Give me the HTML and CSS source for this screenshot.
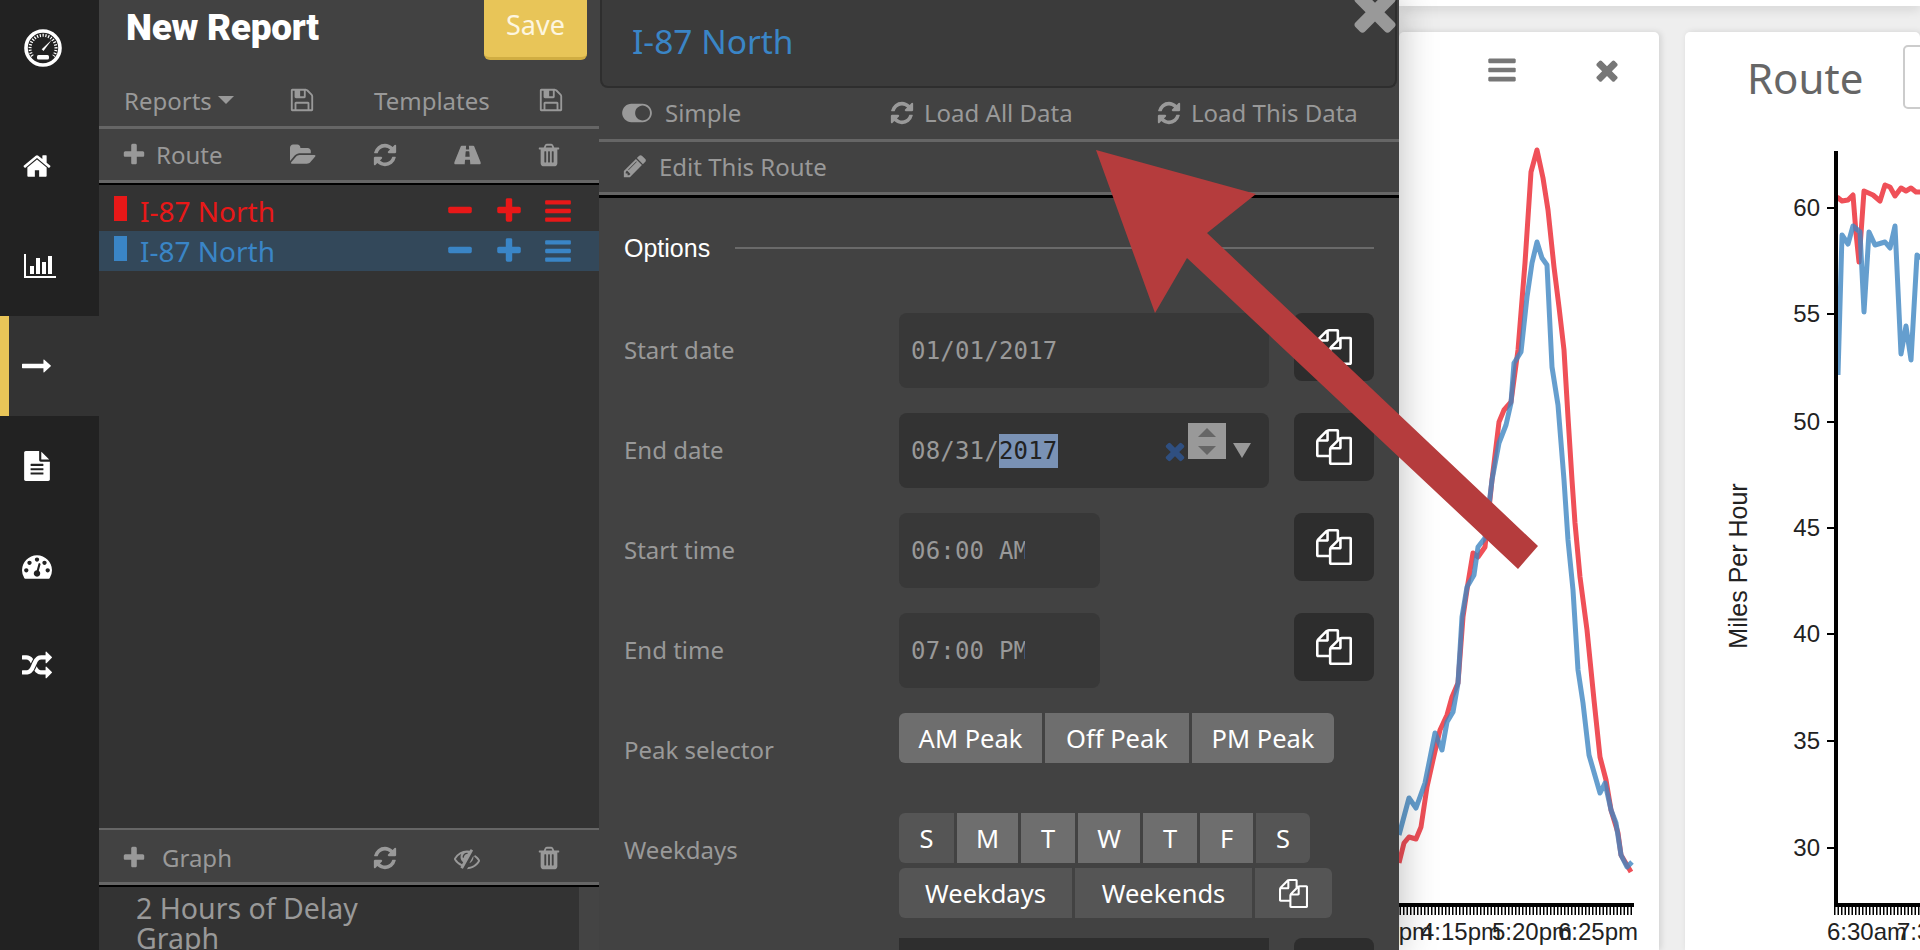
FILE: index.html
```html
<!DOCTYPE html>
<html lang="en">
<head>
    <meta charset="UTF-8">
    <title>New Report</title>
    <link rel="stylesheet" href="styles.css">
</head>
<body>
    <svg class="sprite" xmlns="http://www.w3.org/2000/svg">
        <symbol id="i-plus" viewBox="0 0 1792 1792"><path d="M1600 736v192q0 40-28 68t-68 28h-416v416q0 40-28 68t-68 28h-192q-40 0-68-28t-28-68v-416h-416q-40 0-68-28t-28-68v-192q0-40 28-68t68-28h416v-416q0-40 28-68t68-28h192q40 0 68 28t28 68v416h416q40 0 68 28t28 68z"/></symbol>
        <symbol id="i-minus" viewBox="0 0 1792 1792"><path d="M1600 736v192q0 40-28 68t-68 28h-1216q-40 0-68-28t-28-68v-192q0-40 28-68t68-28h1216q40 0 68 28t28 68z"/></symbol>
        <symbol id="i-bars" viewBox="0 0 1792 1792"><path d="M1664 1344v128q0 26-19 45t-45 19h-1408q-26 0-45-19t-19-45v-128q0-26 19-45t45-19h1408q26 0 45 19t19 45zm0-512v128q0 26-19 45t-45 19h-1408q-26 0-45-19t-19-45v-128q0-26 19-45t45-19h1408q26 0 45 19t19 45zm0-512v128q0 26-19 45t-45 19h-1408q-26 0-45-19t-19-45v-128q0-26 19-45t45-19h1408q26 0 45 19t19 45z"/></symbol>
        <symbol id="i-times" viewBox="0 0 1792 1792"><path d="M1490 1322q0 40-28 68l-136 136q-28 28-68 28t-68-28l-294-294-294 294q-28 28-68 28t-68-28l-136-136q-28-28-28-68t28-68l294-294-294-294q-28-28-28-68t28-68l136-136q28-28 68-28t68 28l294 294 294-294q28-28 68-28t68 28l136 136q28 28 28 68t-28 68l-294 294 294 294q28 28 28 68z"/></symbol>
        <symbol id="i-refresh" viewBox="0 0 1792 1792"><path d="M1639 1056q0 5-1 7-64 268-268 434.5t-478 166.5q-146 0-282.5-55t-243.5-157l-129 129q-19 19-45 19t-45-19-19-45v-448q0-26 19-45t45-19h448q26 0 45 19t19 45-19 45l-137 137q71 66 161 102t187 36q134 0 250-65t186-179q11-17 53-117 8-23 30-23h192q13 0 22.5 9.5t9.5 22.5zm25-800v448q0 26-19 45t-45 19h-448q-26 0-45-19t-19-45 19-45l138-138q-148-137-349-137-134 0-250 65t-186 179q-11 17-53 117-8 23-30 23h-199q-13 0-22.5-9.5t-9.5-22.5v-7q65-268 270-434.5t480-166.5q146 0 284 55.5t245 156.5l130-129q19-19 45-19t45 19 19 45z"/></symbol>
        <symbol id="i-trash" viewBox="0 0 1792 1792"><path d="M704 1376v-704q0-14-9-23t-23-9h-64q-14 0-23 9t-9 23v704q0 14 9 23t23 9h64q14 0 23-9t9-23zm256 0v-704q0-14-9-23t-23-9h-64q-14 0-23 9t-9 23v704q0 14 9 23t23 9h64q14 0 23-9t9-23zm256 0v-704q0-14-9-23t-23-9h-64q-14 0-23 9t-9 23v704q0 14 9 23t23 9h64q14 0 23-9t9-23zm-544-992h448l-48-117q-7-9-17-11h-317q-10 2-17 11zm928 32v64q0 14-9 23t-23 9h-96v948q0 83-47 143.5t-113 60.5h-832q-66 0-113-58.5t-47-141.5v-952h-96q-14 0-23-9t-9-23v-64q0-14 9-23t23-9h309l70-167q15-37 54-63t79-26h320q40 0 79 26t54 63l70 167h309q14 0 23 9t9 23z"/></symbol>
        <symbol id="i-folder" viewBox="0 0 1920 1792"><path d="M1879 952q0 31-31 66l-336 396q-43 51-120.5 86.5t-143.5 35.5h-1088q-34 0-60.5-13t-26.5-43q0-31 31-66l336-396q43-51 120.5-86.5t143.5-35.5h1088q34 0 60.5 13t26.5 43zm-343-344v160h-832q-94 0-197 47.5t-164 119.5l-337 396-5 6q0-4-.5-12.5t-.5-12.5v-960q0-92 66-158t158-66h320q92 0 158 66t66 158v32h544q92 0 158 66t66 158z"/></symbol>
        <symbol id="i-save" viewBox="0 0 1792 1792"><path d="M512 1536h768v-384h-768v384zm896 0h128v-896q0-14-10-38.5t-20-34.5l-281-281q-10-10-34-20t-39-10v416q0 40-28 68t-68 28h-576q-40 0-68-28t-28-68v-416h-128v1280h128v-416q0-40 28-68t68-28h832q40 0 68 28t28 68v416zm-384-928v-320q0-13-9.5-22.5t-22.5-9.5h-192q-13 0-22.5 9.5t-9.5 22.5v320q0 13 9.5 22.5t22.5 9.5h192q13 0 22.5-9.5t9.5-22.5zm640 32v928q0 40-28 68t-68 28h-1344q-40 0-68-28t-28-68v-1344q0-40 28-68t68-28h928q40 0 88 20t76 48l280 280q28 28 48 76t20 88z"/></symbol>
        <symbol id="i-road" viewBox="0 0 1920 1792"><path d="M1111 997v-4l-24-320q-1-13-11-22.5t-23-9.5h-186q-13 0-23 9.5t-11 22.5l-24 320v4q-1 12 8 20t21 8h244q12 0 21-8t8-20zm759 467q0 73-46 73h-704q13 0 22-9.5t8-22.5l-20-256q-1-13-11-22.5t-23-9.5h-272q-13 0-23 9.5t-11 22.5l-20 256q-1 13 8 22.5t22 9.5h-704q-46 0-46-73 0-54 26-116l417-1044q8-19 26-33t38-14h339q-13 0-23 9.5t-11 22.5l-15 192q-1 14 8 23t22 9h166q13 0 22-9t8-23l-15-192q-1-13-11-22.5t-23-9.5h339q20 0 38 14t26 33l417 1044q26 62 26 116z"/></symbol>
        <symbol id="i-pencil" viewBox="0 0 1792 1792"><path d="M491 1536l91-91-235-235-91 91v107h128v128h107zm523-928q0-22-22-22-10 0-17 7l-542 542q-7 7-7 17 0 22 22 22 10 0 17-7l542-542q7-7 7-17zm-54-192l416 416-832 832h-416v-416zm683 96q0 53-37 90l-166 166-416-416 166-165q36-38 90-38 53 0 91 38l235 234q37 39 37 91z"/></symbol>
        <symbol id="i-files" viewBox="0 0 1792 1792"><path d="M1696 384q40 0 68 28t28 68v1216q0 40-28 68t-68 28h-960q-40 0-68-28t-28-68v-288h-544q-40 0-68-28t-28-68v-672q0-40 20-88t48-76l408-408q28-28 76-48t88-20h416q40 0 68 28t28 68v328q68-40 128-40h416zm-544 213l-299 299h299v-299zm-640-384l-299 299h299v-299zm196 647l316-316v-416h-384v416q0 40-28 68t-68 28h-416v640h512v-256q0-40 20-88t48-76zm956 804v-1152h-384v416q0 40-28 68t-68 28h-416v640h896z"/></symbol>
        <symbol id="i-toggle" viewBox="0 0 2048 1792"><path d="M0 896q0-130 51-248.5t136.5-204 204-136.5 248.5-51h768q130 0 248.5 51t204 136.5 136.5 204 51 248.5-51 248.5-136.5 204-204 136.5-248.5 51h-768q-130 0-248.5-51t-204-136.5-136.5-204-51-248.5zm1408 512q104 0 198.5-40.5t163.5-109.5 109.5-163.5 40.5-198.5-40.5-198.5-109.5-163.5-163.5-109.5-198.5-40.5-198.5 40.5-163.5 109.5-109.5 163.5-40.5 198.5 40.5 198.5 109.5 163.5 163.5 109.5 198.5 40.5z"/></symbol>
        <symbol id="i-eye-slash" viewBox="0 0 1792 1792"><path d="M555 1335l78-141q-87-63-136-159t-49-203q0-121 61-225-229 117-381 353 167 258 427 375zm389-759q0-20-14-34t-34-14q-125 0-214.5 89.5t-89.5 214.5q0 20 14 34t34 14 34-14 14-34q0-86 61-147t147-61q20 0 34-14t14-34zm363-191q0 7-1 9-106 189-316 567t-315 566l-49 89q-10 16-28 16-12 0-134-70-16-10-16-28 0-12 44-87-143-65-263.5-173t-208.5-245q-20-31-20-69t20-69q153-235 380-371t496-136q89 0 180 17l54-97q10-16 28-16 5 0 18 6t31 15.5 33 18.5 31.5 18.5 19.5 11.5q16 10 16 27zm37 447q0 139-79 253.5t-209 164.5l280-502q8 45 8 84zm448 256q0 35-20 69-39 64-109 145-150 172-347.5 267t-419.5 95l74-132q212-18 392.5-137t301.5-307q-115-179-282-294l63-112q95 64 182.5 153t144.5 184q20 34 20 69z"/></symbol>
        <symbol id="i-dashboard" viewBox="0 0 1792 1792"><path d="M384 1152q0-53-37.5-90.5t-90.5-37.5-90.5 37.5-37.5 90.5 37.5 90.5 90.5 37.5 90.5-37.5 37.5-90.5zm192-448q0-53-37.5-90.5t-90.5-37.5-90.5 37.5-37.5 90.5 37.5 90.5 90.5 37.5 90.5-37.5 37.5-90.5zm428 481l101-382q6-26-7.5-48.5t-38.5-29.5-48 6.5-30 39.5l-101 382q-60 5-107 43.5t-63 98.5q-20 77 20 146t117 89 146-20 89-117q16-60-6-117t-72-91zm660-33q0-53-37.5-90.5t-90.5-37.5-90.5 37.5-37.5 90.5 37.5 90.5 90.5 37.5 90.5-37.5 37.5-90.5zm-640-640q0-53-37.5-90.5t-90.5-37.5-90.5 37.5-37.5 90.5 37.5 90.5 90.5 37.5 90.5-37.5 37.5-90.5zm448 192q0-53-37.5-90.5t-90.5-37.5-90.5 37.5-37.5 90.5 37.5 90.5 90.5 37.5 90.5-37.5 37.5-90.5zm320 448q0 261-141 483-19 29-54 29h-1402q-35 0-54-29-141-221-141-483 0-182 71-348t191-286 286-191 348-71 348 71 286 191 191 286 71 348z"/></symbol>
        <symbol id="i-home" viewBox="0 0 1792 1792"><path d="M1472 992v480q0 26-19 45t-45 19h-384v-384h-256v384h-384q-26 0-45-19t-19-45v-480q0-1 .5-3t.5-3l575-474 575 474q1 2 1 6zm223-69l-62 74q-8 9-21 11h-3q-13 0-21-7l-692-577-692 577q-12 8-24 7-13-2-21-11l-62-74q-8-10-7-23.5t11-21.5l719-599q32-26 76-26t76 26l244 204v-195q0-14 9-23t23-9h192q14 0 23 9t9 23v408l219 182q10 8 11 21.5t-7 23.5z"/></symbol>
        <symbol id="i-chart" viewBox="0 0 2048 1792"><path d="M640 896v512h-256v-512h256zm384-512v1024h-256v-1024h256zm1024 1152v128h-2048v-1536h128v1408h1920zm-640-896v768h-256v-768h256zm384-384v1152h-256v-1152h256z"/></symbol>
        <symbol id="i-arrow" viewBox="0 0 1792 1792"><path d="M1728 893q0 14-10 24l-384 354q-16 14-35 6-19-9-19-29v-224h-1248q-14 0-23-9t-9-23v-192q0-14 9-23t23-9h1248v-224q0-21 19-29t35 5l384 350q10 10 10 24z"/></symbol>
        <symbol id="i-file" viewBox="0 0 1792 1792"><path d="M1596 476q14 14 28 36h-472v-472q22 14 36 28zm-476 164h544v1056q0 40-28 68t-68 28h-1344q-40 0-68-28t-28-68v-1600q0-40 28-68t68-28h800v544q0 40 28 68t68 28zm160 736v-64q0-14-9-23t-23-9h-704q-14 0-23 9t-9 23v64q0 14 9 23t23 9h704q14 0 23-9t9-23zm0-256v-64q0-14-9-23t-23-9h-704q-14 0-23 9t-9 23v64q0 14 9 23t23 9h704q14 0 23-9t9-23zm0-256v-64q0-14-9-23t-23-9h-704q-14 0-23 9t-9 23v64q0 14 9 23t23 9h704q14 0 23-9t9-23z"/></symbol>
        <symbol id="i-random" viewBox="0 0 1792 1792"><path d="M666 481q-60 92-137 273-22-45-37-72.5t-40.5-63.5-51-56.5-63-35-81.5-14.5h-224q-14 0-23-9t-9-23v-192q0-14 9-23t23-9h224q250 0 410 225zm1126 799q0 14-9 23l-320 320q-9 9-23 9-13 0-22.5-9.5t-9.5-22.5v-192q-32 0-85 .5t-81 1-73-1-71-5-64-10.5-63-18.5-58-28.5-59-40-55-53.5-56-69.5q59-93 136-273 22 45 37 72.5t40.5 63.5 51 56.5 63 35 81.5 14.5h256v-192q0-14 9-23t23-9q12 0 24 10l319 319q9 9 9 23zm0-896q0 14-9 23l-320 320q-9 9-23 9-13 0-22.5-9.5t-9.5-22.5v-192h-256q-48 0-87 15t-69 45-51 61.5-45 77.5q-32 62-78 171-29 66-49.5 111t-54 105-64 100-74 83-90 68.5-106.5 42-128 16.5h-224q-14 0-23-9t-9-23v-192q0-14 9-23t23-9h224q48 0 87-15t69-45 51-61.5 45-77.5q32-62 78-171 29-66 49.5-111t54-105 64-100 74-83 90-68.5 106.5-42 128-16.5h256v-192q0-14 9-23t23-9q12 0 24 10l319 319q9 9 9 23z"/></symbol>
    </svg>

    <!-- main icon rail -->
    <nav class="rail">
        <div class="rail-logo">
            <svg class="logo" viewBox="0 0 38 38">
                <circle cx="19" cy="19" r="17" fill="none" stroke="#fff" stroke-width="3.6"/>
                <path class="logo-ticks" d="M8.5 27A13 13 0 1 1 29.500 27"/>
                <path d="M17.700 20.200L28 10.500l-8.500 11.500z" fill="#fff"/>
                <rect x="13" y="26" width="12" height="4.500" rx="1.500" fill="#fff"/>
            </svg>
        </div>
        <a class="rail-item"><svg class="rail-icon"><use href="#i-home"/></svg></a>
        <a class="rail-item"><svg class="rail-icon rail-icon-wide"><use href="#i-chart"/></svg></a>
        <a class="rail-item active"><svg class="rail-icon"><use href="#i-arrow"/></svg></a>
        <a class="rail-item"><svg class="rail-icon rail-icon-tall"><use href="#i-file"/></svg></a>
        <a class="rail-item"><svg class="rail-icon"><use href="#i-dashboard"/></svg></a>
        <a class="rail-item"><svg class="rail-icon"><use href="#i-random"/></svg></a>
    </nav>

    <!-- report panel -->
    <section class="report">
        <header class="report-head">
            <h1 class="report-title">New Report</h1>
            <button class="save-btn">Save</button>
        </header>
        <div class="tool-row tool-row-reports">
            <span class="tool-label">Reports <span class="caret"></span></span>
            <svg class="icon"><use href="#i-save"/></svg>
            <span class="tool-label tool-templates">Templates</span>
            <svg class="icon"><use href="#i-save"/></svg>
        </div>
        <div class="tool-row tool-row-route">
            <span class="tool-label"><svg class="icon"><use href="#i-plus"/></svg> Route</span>
            <svg class="icon"><use href="#i-folder"/></svg>
            <svg class="icon"><use href="#i-refresh"/></svg>
            <svg class="icon icon-road"><use href="#i-road"/></svg>
            <svg class="icon"><use href="#i-trash"/></svg>
        </div>
        <ul class="route-list">
            <li class="route route-red">
                <span class="route-mark"></span>
                <span class="route-name">I-87 North</span>
                <svg class="route-icon"><use href="#i-minus"/></svg>
                <svg class="route-icon"><use href="#i-plus"/></svg>
                <svg class="route-icon"><use href="#i-bars"/></svg>
            </li>
            <li class="route route-blue">
                <span class="route-mark"></span>
                <span class="route-name">I-87 North</span>
                <svg class="route-icon"><use href="#i-minus"/></svg>
                <svg class="route-icon"><use href="#i-plus"/></svg>
                <svg class="route-icon"><use href="#i-bars"/></svg>
            </li>
        </ul>
        <div class="tool-row tool-row-graph">
            <span class="tool-label"><svg class="icon"><use href="#i-plus"/></svg> Graph</span>
            <svg class="icon"><use href="#i-refresh"/></svg>
            <svg class="icon"><use href="#i-eye-slash"/></svg>
            <svg class="icon"><use href="#i-trash"/></svg>
        </div>
        <div class="graph-list">
            <div class="graph-name">2 Hours of Delay Graph</div>
            <div class="graph-scroll"></div>
        </div>
    </section>

    <!-- route editor -->
    <section class="editor">
        <div class="editor-name">I-87 North</div>
        <svg class="editor-close"><use href="#i-times"/></svg>
        <div class="editor-actions">
            <span class="action action-simple"><svg class="icon icon-toggle"><use href="#i-toggle"/></svg>Simple</span>
            <span class="action"><svg class="icon"><use href="#i-refresh"/></svg>Load All Data</span>
            <span class="action"><svg class="icon"><use href="#i-refresh"/></svg>Load This Data</span>
        </div>
        <div class="editor-edit">
            <span class="action"><svg class="icon"><use href="#i-pencil"/></svg>Edit This Route</span>
        </div>
        <div class="options-head"><span>Options</span><i class="options-line"></i></div>

        <div class="field">
            <label class="field-label">Start date</label>
            <div class="value-box"><span class="mono">01/01/2017</span></div>
            <button class="copy-btn"><svg class="copy-icon"><use href="#i-files"/></svg></button>
        </div>
        <div class="field">
            <label class="field-label">End date</label>
            <div class="value-box value-box-focus">
                <span class="mono">08/31/<span class="mono-sel">2017</span></span>
                <svg class="date-clear"><use href="#i-times"/></svg>
                <span class="date-spin"><i class="spin-up"></i><i class="spin-down"></i></span>
                <span class="date-drop"></span>
            </div>
            <button class="copy-btn"><svg class="copy-icon"><use href="#i-files"/></svg></button>
        </div>
        <div class="field">
            <label class="field-label">Start time</label>
            <div class="value-box value-box-time"><span class="mono mono-clip">06:00 AM</span></div>
            <button class="copy-btn"><svg class="copy-icon"><use href="#i-files"/></svg></button>
        </div>
        <div class="field">
            <label class="field-label">End time</label>
            <div class="value-box value-box-time"><span class="mono mono-clip">07:00 PM</span></div>
            <button class="copy-btn"><svg class="copy-icon"><use href="#i-files"/></svg></button>
        </div>
        <div class="field">
            <label class="field-label">Peak selector</label>
            <div class="btn-group">
                <button class="seg seg-on seg-peak1">AM Peak</button>
                <button class="seg seg-on seg-peak2">Off Peak</button>
                <button class="seg seg-on seg-peak3">PM Peak</button>
            </div>
        </div>
        <div class="field field-days">
            <label class="field-label">Weekdays</label>
            <div class="days">
                <div class="btn-group">
                    <button class="seg seg-d1">S</button>
                    <button class="seg seg-on seg-d2">M</button>
                    <button class="seg seg-on seg-d3">T</button>
                    <button class="seg seg-on seg-d4">W</button>
                    <button class="seg seg-on seg-d5">T</button>
                    <button class="seg seg-on seg-d6">F</button>
                    <button class="seg seg-d7">S</button>
                </div>
                <div class="btn-group">
                    <button class="seg seg-weekdays">Weekdays</button>
                    <button class="seg seg-weekends">Weekends</button>
                    <button class="seg seg-copy"><svg class="seg-icon"><use href="#i-files"/></svg></button>
                </div>
            </div>
        </div>
        <div class="field">
            <label class="field-label"></label>
            <div class="value-box value-box-last"></div>
            <button class="copy-btn"></button>
        </div>
    </section>

    <!-- graphs behind the editor -->
    <main class="board">
        <div class="board-top"></div>
        <div class="cards">
            <article class="card card-first">
                <div class="card-head">
                    <svg class="card-tool card-bars"><use href="#i-bars"/></svg>
                    <svg class="card-tool card-close"><use href="#i-times"/></svg>
                </div>
                <svg class="chart" viewBox="0 80 260 838" width="260" height="838">
                    <polyline class="line line-red" points="0,831 5,811 10,805 17,807 22,795 28,755 34,728 41,698 48,683 53,665 59,651 64,585 69,551 74,521 79,525 86,515 93,448 100,390 105,378 112,370 119,318 126,231 132,140 138,118 144,146 149,178 155,235 160,275 165,318 169,385 173,448 176,491 181,545 188,598 195,668 201,725 207,748 212,778 219,801 222,823 232,840"/>
                    <polyline class="line line-blue" points="0,803 10,766 17,776 26,751 36,701 43,718 48,690 54,680 59,651 63,585 68,555 75,543 79,515 86,506 93,448 100,411 107,393 112,371 115,331 122,320 128,265 133,231 138,210 143,226 148,233 153,335 159,373 165,448 169,508 174,558 179,638 184,671 190,723 201,761 206,751 212,778 217,791 222,823 228,835 233,830"/>
                    <line class="axis" x1="-10" y1="873" x2="235" y2="873"/>
                    <line class="ticks" x1="-10" y1="879" x2="235" y2="879"/>
                    <text class="tick-text" x="-47" y="908">3:10pm</text>
                    <text class="tick-text" x="22" y="908">4:15pm</text>
                    <text class="tick-text" x="93" y="908">5:20pm</text>
                    <text class="tick-text" x="159" y="908">6:25pm</text>
                </svg>
            </article>
            <article class="card card-second">
                <div class="card-head card-head-route">
                    <span class="card-title">Route</span>
                    <span class="card-select"></span>
                </div>
                <svg class="chart" viewBox="0 80 235 838" width="235" height="838">
                    <polyline class="line line-red" points="152,165 157,169 163,168 168,163 171,201 174,230 179,159 188,163 195,169 200,153 205,155 210,164 216,156 221,159 226,156 231,160 236,160"/>
                    <polyline class="line line-blue" points="153,343 157,203 163,212 168,194 175,200 179,280 184,200 190,213 200,210 205,216 210,194 216,322 221,294 226,328 232,223 236,226"/>
                    <line class="axis" x1="151" y1="119" x2="151" y2="875"/>
                    <line class="axis" x1="149" y1="873" x2="235" y2="873"/>
                    <line class="ticks" x1="149" y1="879" x2="235" y2="879"/>
                    <path class="tick-marks" d="M142 176h9M142 282h9M142 390h9M142 496h9M142 602h9M142 709h9M142 816h9"/>
                    <text class="tick-text tick-y" x="135" y="184">60</text>
                    <text class="tick-text tick-y" x="135" y="290">55</text>
                    <text class="tick-text tick-y" x="135" y="398">50</text>
                    <text class="tick-text tick-y" x="135" y="504">45</text>
                    <text class="tick-text tick-y" x="135" y="610">40</text>
                    <text class="tick-text tick-y" x="135" y="717">35</text>
                    <text class="tick-text tick-y" x="135" y="824">30</text>
                    <text class="axis-title" transform="translate(62 534) rotate(-90)">Miles Per Hour</text>
                    <text class="tick-text" x="142" y="908">6:30am</text>
                    <text class="tick-text" x="212" y="908">7:35am</text>
                </svg>
            </article>
        </div>
    </main>

    <!-- annotation drawn on top of the screenshot -->
    <svg class="callout" viewBox="0 0 1920 950">
        <polygon points="1096,150 1256,194 1207,233 1538,546 1518,569 1187,258 1155,313"/>
    </svg>
</body>
</html>
```

FILE: styles.css
```css
* {
    box-sizing: border-box;
}

html {
    height: 100%;
    overflow: hidden;
}

body {
    margin: 0;
    display: flex;
    position: relative;
    height: 950px;
    overflow: hidden;
    font-family: "Noto Sans", sans-serif;
    background: #eee;
    color: #999;
}

.sprite {
    display: none;
}

svg {
    fill: currentColor;
    flex: none;
}

button {
    font-family: inherit;
    border: none;
    padding: 0;
}

/* icon rail */
.rail {
    width: 99px;
    flex: none;
    background: #222;
    color: #fff;
    z-index: 3;
}

.rail-logo {
    height: 116px;
    padding: 29px 0 0 24px;
}

.logo {
    width: 38px;
    height: 38px;
}

.logo-ticks {
    fill: none;
    stroke: #fff;
    stroke-width: 3;
    stroke-dasharray: 1.2 1.6;
}

.rail-item {
    height: 100px;
    display: flex;
    align-items: center;
    padding-left: 13px;
    border-left: 9px solid transparent;
}

.rail-item.active {
    background: #333;
    border-left-color: #e8c558;
}

.rail-icon {
    width: 30px;
    height: 30px;
}

.rail-icon-wide {
    width: 32px;
    height: 30px;
    margin-left: 2px;
}

.rail-icon-tall {
    width: 30px;
    height: 32px;
}

/* report panel */
.report {
    width: 500px;
    flex: none;
    display: flex;
    flex-direction: column;
    background: #333;
    z-index: 3;
}

.report > * {
    flex: none;
}

.report-head {
    height: 76px;
    background: #424242;
    display: flex;
    justify-content: space-between;
    padding: 0 12px 0 27px;
}

.report-title {
    margin: 7px 0 0;
    font-family: Roboto, sans-serif;
    font-size: 37px;
    font-weight: 900;
    line-height: 42px;
    letter-spacing: -0.3px;
    color: #fff;
}

.save-btn {
    width: 103px;
    height: 60px;
    padding-bottom: 8px;
    background: #e8c558;
    border-bottom: 3px solid #d0ad42;
    border-radius: 0 0 6px 6px;
    color: #fdf6e0;
    font-size: 27px;
}

.icon {
    width: 26px;
    height: 26px;
}

.icon-road {
    width: 29px;
}

.tool-row {
    display: grid;
    grid-template-columns: 138px repeat(4, 82px);
    align-items: center;
    justify-items: center;
    background: #424242;
    padding-left: 25px;
    border-bottom: 3px solid #666;
    font-size: 24px;
}

.tool-label {
    display: flex;
    align-items: center;
    justify-self: start;
    gap: 9px;
}

.tool-label .icon {
    margin-left: -3px;
}

.tool-row-reports {
    height: 53px;
    padding-bottom: 2px;
}

.tool-row-reports .tool-label {
    gap: 6px;
}

.tool-row-reports .icon {
    margin-right: 2px;
}

.tool-row-reports .icon:last-child {
    margin: 0 0 0 4px;
}

.tool-templates {
    grid-column: 3 / 5;
    padding-left: 30px;
}

.caret {
    width: 0;
    height: 0;
    border-left: 8px solid transparent;
    border-right: 8px solid transparent;
    border-top: 8px solid #999;
}

.tool-row-route {
    height: 54px;
    box-shadow: 0 2px 0 #000;
    position: relative;
}

.tool-row-graph {
    height: 57px;
    padding-top: 3px;
    border-top: 2px solid #666;
    box-shadow: 0 2px 0 #000;
    position: relative;
}

.tool-row-graph .tool-label {
    grid-column: 1 / 3;
    gap: 15px;
}

/* routes */
.route-list {
    list-style: none;
    margin: 0;
    padding: 8px 0 0;
    height: 645px;
}

.route {
    height: 40px;
    display: flex;
    align-items: center;
    padding: 0 26px 0 15px;
    font-size: 28px;
}

.route-mark {
    width: 13px;
    height: 25px;
    margin-top: -5px;
    background: currentColor;
}

.route-name {
    flex: 1;
    margin-left: 13px;
}

.route-icon {
    width: 30px;
    height: 30px;
    margin-left: 19px;
}

.route-red {
    color: #e81818;
}

.route-blue {
    color: #3a85c6;
    background: #33485a;
}

.graph-list {
    flex: 1;
    min-height: 0;
    display: flex;
    justify-content: space-between;
    padding-left: 37px;
    font-size: 28.500px;
    line-height: 30px;
}

.graph-name {
    width: 290px;
    padding-top: 8px;
}

.graph-scroll {
    width: 20px;
    background: #444;
}

/* route editor */
.editor {
    position: relative;
    width: 800px;
    flex: none;
    background: #424242;
    box-shadow: 0 0 36px rgba(0, 0, 0, 0.28);
    z-index: 2;
}

.editor-name {
    margin: 0 2px 0 1px;
    height: 88px;
    padding: 19px 30px 0;
    background: #3b3b3b;
    border: 2px solid #2e2e2e;
    border-top: none;
    border-radius: 0 0 8px 8px;
    color: #3a85c6;
    font-size: 33.500px;
    line-height: 44px;
}

.editor-close {
    position: absolute;
    top: -21px;
    right: -7px;
    width: 62px;
    height: 62px;
    color: #999;
}

.editor-actions, .editor-edit {
    display: flex;
    align-items: center;
    font-size: 24px;
    padding-left: 23px;
    border-bottom: 3px solid #666;
}

.editor-actions {
    display: grid;
    grid-template-columns: 267px 267px 1fr;
    height: 54px;
    padding-bottom: 2px;
}

.editor-edit {
    height: 53px;
    padding-bottom: 2px;
    box-shadow: 0 3px 0 #000;
    position: relative;
}

.action {
    display: flex;
    align-items: center;
    gap: 9px;
}

.action-simple {
    gap: 13px;
}

.editor-edit .action {
    gap: 11px;
}

.icon-toggle {
    width: 30px;
}

.options-head {
    display: flex;
    align-items: center;
    gap: 25px;
    height: 100px;
    margin: 3px 25px 15px 25px;
    color: #fff;
    font-family: "Liberation Sans", sans-serif;
    font-size: 25px;
}

.options-line {
    flex: 1;
    height: 2px;
    background: #6a6a6a;
}

.field {
    display: grid;
    grid-template-columns: 275px 370px 80px;
    margin: 0 0 25px 25px;
    align-items: start;
}

.field-days {
    margin-bottom: 20px;
}

.field-label {
    height: 75px;
    line-height: 73px;
    font-size: 24px;
}

.value-box {
    position: relative;
    height: 75px;
    display: flex;
    align-items: center;
    padding-left: 12px;
    background: #383838;
    border-radius: 8px;
}

.value-box-focus {
    background: #333;
}

.value-box-time {
    width: 201px;
}

.value-box-last {
    background: #2e2e2e;
    border-radius: 0;
}

.mono {
    font-family: "DejaVu Sans Mono", monospace;
    font-size: 24px;
    letter-spacing: 0.2px;
    color: #999;
    white-space: pre;
}

.mono-clip {
    display: inline-block;
    width: 114px;
    overflow: hidden;
}

.mono-sel {
    background: #7a92b5;
    color: #222;
    padding: 3px 0;
}

.date-clear {
    position: absolute;
    left: 262px;
    top: 24px;
    width: 28px;
    height: 28px;
    color: #2f4f80;
}

.date-spin {
    position: absolute;
    left: 289px;
    top: 10px;
    width: 38px;
    height: 36px;
    background: #999;
    display: flex;
    flex-direction: column;
    align-items: center;
    justify-content: space-around;
}

.spin-up, .spin-down {
    width: 0;
    height: 0;
    border-left: 9px solid transparent;
    border-right: 9px solid transparent;
}

.spin-up {
    border-bottom: 9px solid #666;
}

.spin-down {
    border-top: 9px solid #666;
}

.date-drop {
    position: absolute;
    left: 334px;
    top: 30px;
    width: 0;
    height: 0;
    border-left: 9px solid transparent;
    border-right: 9px solid transparent;
    border-top: 15px solid #999;
}

.copy-btn {
    grid-column: 3;
    width: 80px;
    height: 68px;
    margin-left: 25px;
    background: #2d2d2d;
    border-radius: 8px;
    color: #fff;
    display: flex;
    align-items: center;
    justify-content: center;
}

.copy-icon {
    width: 36px;
    height: 36px;
}

.btn-group {
    display: flex;
    width: max-content;
    gap: 3px;
}

.days {
    display: flex;
    flex-direction: column;
    gap: 5px;
}

.seg {
    flex: none;
    height: 50px;
    background: #555;
    color: #fff;
    font-size: 25.500px;
    display: flex;
    align-items: center;
    justify-content: center;
}

.seg-on {
    background: #6e6e6e;
}

.btn-group .seg:first-child {
    border-radius: 6px 0 0 6px;
}

.btn-group .seg:last-child {
    border-radius: 0 6px 6px 0;
}

.seg-peak1 { width: 143px; }
.seg-peak2 { width: 144px; }
.seg-peak3 { width: 142px; }
.seg-d1 { width: 55px; }
.seg-d2 { width: 61px; }
.seg-d3 { width: 54px; }
.seg-d4 { width: 62px; }
.seg-d5 { width: 54px; }
.seg-d6 { width: 53px; }
.seg-d7 { width: 54px; }
.seg-weekdays { width: 173px; }
.seg-weekends { width: 177px; }
.seg-copy { width: 77px; }

.seg-icon {
    width: 29px;
    height: 29px;
}

/* graphs */
.board {
    flex: 1;
    min-width: 0;
}

.board-top {
    height: 6px;
    background: #fff;
    box-shadow: 0 2px 12px rgba(0, 0, 0, 0.18);
    position: relative;
}

.cards {
    display: flex;
    gap: 26px;
    padding-top: 26px;
}

.card {
    background: #fff;
    border-radius: 5px 5px 0 0;
    box-shadow: 2px 0 6px rgba(0, 0, 0, 0.12);
    height: 918px;
    overflow: hidden;
}

.card-first {
    width: 260px;
}

.card-second {
    width: 235px;
}

.card-head {
    height: 80px;
    display: flex;
    color: #777;
}

.card-tool {
    width: 32px;
    height: 32px;
    margin-top: 22px;
}

.card-bars {
    margin-left: 87px;
}

.card-close {
    margin-left: 73px;
}

.card-head-route {
    padding: 13px 0 0 62px;
}

.card-title {
    font-size: 42px;
    line-height: 66px;
    color: #666;
}

.card-select {
    width: 60px;
    height: 64px;
    flex: none;
    margin-left: 40px;
    border: 2px solid #ccc;
    border-radius: 5px;
}

.chart {
    display: block;
    overflow: visible;
}

.line {
    fill: none;
    stroke-width: 5;
    stroke-linejoin: round;
}

.line-red {
    stroke: #ef5058;
}

.line-blue {
    stroke: #3f86c2;
    opacity: 0.8;
}

.axis {
    stroke: #000;
    stroke-width: 4;
}

.ticks {
    stroke: #000;
    stroke-width: 8;
    stroke-dasharray: 1.5 2;
}

.tick-marks {
    stroke: #000;
    stroke-width: 2;
    fill: none;
}

.tick-text, .axis-title {
    font-family: "Liberation Sans", sans-serif;
    font-size: 24px;
    fill: #222;
}

.tick-y {
    text-anchor: end;
}

.axis-title {
    text-anchor: middle;
    font-size: 25px;
}

/* big red arrow */
.callout {
    position: absolute;
    top: 0;
    left: 0;
    width: 1920px;
    height: 950px;
    fill: #b53c3d;
    pointer-events: none;
    z-index: 5;
}
```
